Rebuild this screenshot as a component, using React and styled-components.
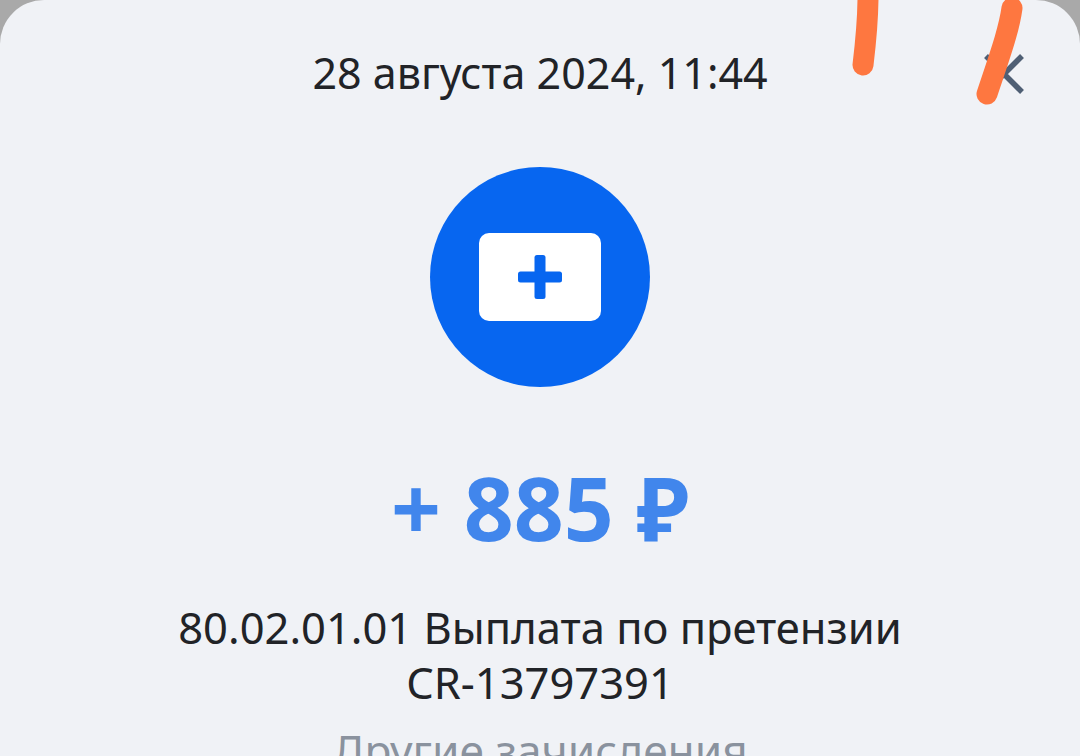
import React from 'react'
import styled, { createGlobalStyle } from 'styled-components'

const GlobalStyle = createGlobalStyle`
  html, body {
    margin: 0;
    padding: 0;
    height: 100%;
    overflow: hidden;
    background: #a9a9a9;
  }
  * { box-sizing: border-box; }
`

const Screen = styled.div`
  position: relative;
  width: 1080px;
  height: 756px;
  overflow: hidden;
  font-family: "Noto Sans", "Open Sans", sans-serif;
`

const Sheet = styled.div`
  height: 100%;
  background: #f0f2f6;
  border-radius: 44px 44px 0 0;
  display: flex;
  flex-direction: column;
  align-items: center;
  padding-top: 44px;
`

const DateLine = styled.div`
  flex-shrink: 0;
  font-size: 43px;
  line-height: 58px;
  color: #212327;
  text-align: center;
`

const CloseButton = styled.button`
  position: absolute;
  top: 52px;
  right: 54px;
  width: 44px;
  height: 44px;
  padding: 0;
  border: 0;
  background: none;
  display: flex;
`

const Badge = styled.div`
  flex-shrink: 0;
  width: 220px;
  height: 220px;
  margin-top: 65px;
  border-radius: 50%;
  background: #0766f0;
  display: flex;
  align-items: center;
  justify-content: center;
`

const Amount = styled.div`
  flex-shrink: 0;
  margin-top: 67px;
  font-size: 87.5px;
  line-height: 106px;
  font-weight: 700;
  color: #4186ec;
  text-align: center;
`

const Description = styled.div`
  flex-shrink: 0;
  margin-top: 40px;
  font-size: 43.5px;
  line-height: 55px;
  color: #212327;
  text-align: center;
`

const Category = styled.div`
  flex-shrink: 0;
  margin-top: 11px;
  font-size: 44.3px;
  line-height: 58px;
  color: #8a929e;
  text-align: center;
`

const Scribble = styled.svg`
  position: absolute;
  top: 0;
  left: 0;
  pointer-events: none;
`

export default function App() {
  return (
    <Screen>
      <GlobalStyle />
      <Sheet>
        <DateLine>28 августа 2024, 11:44</DateLine>
        <CloseButton aria-label="Закрыть">
          <svg width="44" height="44" viewBox="0 0 44 44" fill="none">
            <path d="M4 4 L40 40 M40 4 L4 40" stroke="#4f5f74" strokeWidth="5.5" />
          </svg>
        </CloseButton>
        <Badge>
          <svg width="122" height="88" viewBox="0 0 122 88">
            <rect x="0" y="0" width="122" height="88" rx="10" fill="#fff" />
            <rect x="55.5" y="22" width="11" height="44" rx="2.5" fill="#0766f0" />
            <rect x="39" y="38.5" width="44" height="11" rx="2.5" fill="#0766f0" />
          </svg>
        </Badge>
        <Amount>+ 885 ₽</Amount>
        <Description>
          80.02.01.01 Выплата по претензии
          <br />
          CR-13797391
        </Description>
        <Category>Другие зачисления</Category>
      </Sheet>
      <Scribble width="1080" height="756" viewBox="0 0 1080 756" fill="none">
        <path d="M868 -4 C868 20 866 40 863 65" stroke="#fe7740" strokeWidth="21" strokeLinecap="round" />
        <path d="M1012 8 C1009 30 1000 55 987 94" stroke="#fe7740" strokeWidth="21" strokeLinecap="round" />
      </Scribble>
    </Screen>
  )
}
